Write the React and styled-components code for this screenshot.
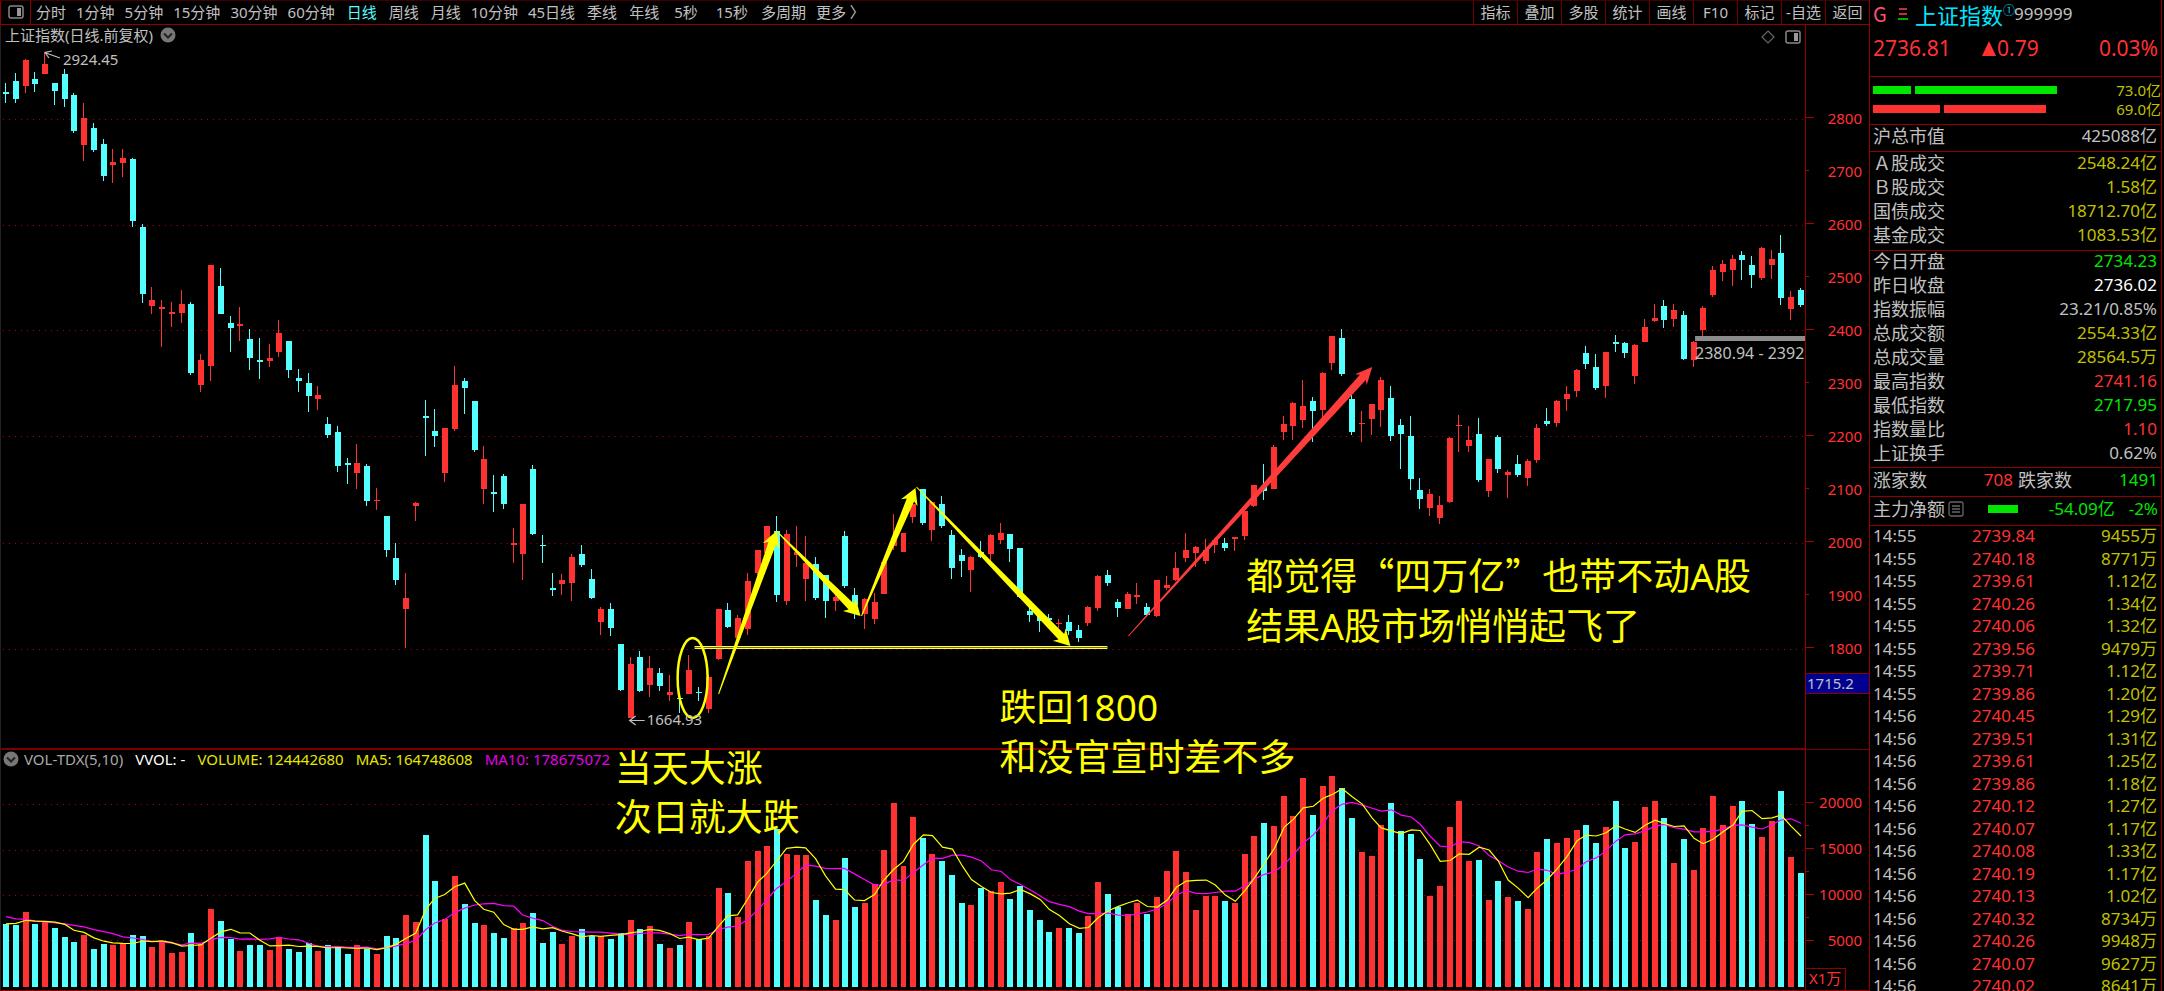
import React from 'react';
import styled, { createGlobalStyle } from 'styled-components';

const RED = '#ff3232';
const CYAN = '#54ffff';
const GREEN = '#00e600';
const GOLD = '#c0c000';
const GREY = '#c0c0c0';
const LINE = '#900000';
const SANS = '"Noto Sans", "Noto Sans CJK SC", sans-serif';

const GlobalStyle = createGlobalStyle`
  * { box-sizing: border-box; }
  body {
    margin: 0;
    background: #000;
    color: ${GREY};
    font: 15px/20px ${SANS};
    overflow: hidden;
  }
`;

/* ---------- chart data ---------- */

/* Each block: vertical origin, then candles as colour, high, body top, body bottom, low (thirds of a unit). */
const BLOCKS = [
  [0, `c248,275,281,310 c218,243,297,310 r178,181,258,278 c215,237,251,276 r160,192,222,222 c248,249,273,314
  c207,222,296,321 c278,285,394,400 r308,353,435,482 c368,383,450,456 c416,432,528,543 r447,486,496,549
  r447,474,488,531 c474,477,663,681 c672,680,882,909 r860,900,919,943 r901,920,926,1041 r905,935,941,980
  r871,912,938,970 c905,911,1118,1124 r1062,1080,1155,1175 r796,796,1099,1143 c803,858,941,943 c949,968,983,1055
  r922,972,978,1022 c987,1017,1074,1109 c1013,1080,1085,1136 r1032,1074,1084,1102 r960,999,1055,1071
  c1023,1024,1110,1134 c1107,1134,1143,1175 c1118,1149,1189,1236 r1159,1186,1196,1231`],
  [340, `c230,252,285,293 c259,275,379,395 c353,369,375,431 r312,369,399,448 c373,379,484,497 r444,480,484,509
  c528,529,630,651 c608,654,720,734 r698,773,806,924 r487,489,499,543 c181,227,233,348 c207,274,289,321
  r263,264,399,426 r79,136,267,272 c113,124,143,221 c184,184,330,336 r319,357,447,493 c405,455,461,516
  c402,409,492,508 r564,609,614,669 r491,492,641,719 c375,387,582,584 c586,614,618,669 c698,744,749,768
  r702,721,731,764 r642,650,728,783 c616,642,676,680 c687,717,773,778 r800,807,845,884 c788,807,864,887
  c911,912,1050,1053 r950,972,1133,1135 c934,950,1054,1055 r947,984,1035,1071 c983,998,1039,1053 r1005,1055,1065,1083`],
  [460, `c708,714,717,760 r586,630,701,703 c680,695,699,722 r646,650,747,760 r447,448,598,600 c429,450,500,503
  r465,474,533,535 r338,364,508,526 r270,271,340,345 r198,199,280,285 c169,213,405,426 r210,222,423,434
  r199,275,285,321 r229,308,357,423 c290,311,413,419 c345,346,423,474 r400,411,423,452 c214,228,379,385
  c383,405,435,478 r414,416,462,508 r398,425,476,492 r300,305,402,403 r162,235,258,270 r218,219,275,288
  r130,132,170,188 c87,88,188,194 r122,125,210,242 c109,132,199,204 c210,225,324,358 c267,285,303,351
  r288,291,330,395 c243,275,290,295 r222,225,282,305 r188,219,241,252 c221,222,267,306 c263,264,412,415
  c445,452,465,486 c450,465,484,516 c462,475,480,500 r477,489,492,503 c465,486,513,526 c495,510,534,546
  r438,440,488,497 r346,349,443,452 c331,346,369,377 c416,425,443,471 r395,402,446,447 r369,404,411,431`],
  [300, `c909,921,945,948 r840,841,948,951 r829,855,865,870 r755,804,841,843 r698,750,773,785 r737,740,759,800
  r717,750,784,793 r715,720,735,760 c713,728,744,752 r710,711,716,753 r628,632,708,720 r555,556,619,621
  c492,560,573,600 r435,440,567,568 r348,372,395,419 r306,309,379,419 r240,317,359,384 c292,304,333,426
  r215,219,330,360 r108,109,188,209 c87,113,221,227 c285,297,395,404 r334,368,372,426 r311,312,356,404
  r230,240,330,381 c259,294,408,423 c356,375,402,506 c349,408,537,569 c533,570,597,628 r568,582,623,647
  r588,616,654,671 r410,413,607,609 r345,376,379,456 r377,420,438,455`],
  [200, `c655,702,840,846 r776,777,873,891 c705,710,806,819 r809,815,825,895 c765,792,825,830 r777,783,833,857
  r672,683,780,790 c623,664,671,678 r600,604,668,681 r559,582,597,632 r507,510,574,591 c438,459,491,508
  c461,500,564,569 r455,455,559,594 c405,426,431,455 c425,429,459,474 r432,435,528,552 r357,380,426,427
  r312,353,364,365 c299,319,360,384 r311,330,356,381 c334,346,477,480 r422,425,481,501 r319,323,390,410
  r199,210,285,292 r179,192,216,243 r165,177,210,258 c153,166,181,240 c169,195,225,265 r140,144,234,239
  r150,177,195,236 c105,158,293,314 r274,290,326,359 c263,270,315,320`],
];

const CANDLES = BLOCKS.flatMap(([origin, text]) =>
  text.trim().split(/\s+/).map((item) => {
    const [high, top, bottom, low] = item.slice(1).split(',').map((n) => origin + Number(n) / 3);
    return { color: item[0] === 'r' ? RED : CYAN, high, top, bottom, low };
  }),
);

/* Depth of each volume bar's top below the pane origin; the lead-in only feeds the averages. */
const LEAD_IN = [490, 500, 510, 520, 520, 563, 563, 540, 541];
const VOLUMES = [
  552, 555, 517, 552, 544, 563, 590, 605, 584, 627, 612, 615, 613, 586, 589, 622, 604, 640, 637, 579, 613, 506, 544,
  597, 633, 615, 615, 629, 592, 627, 635, 609, 633, 616, 620, 642, 615, 627, 641, 589, 594, 525, 547, 286, 424, 536,
  408, 492, 549, 555, 579, 594, 563, 549, 519, 609, 576, 612, 589, 567, 589, 589, 597, 579, 540, 567, 558, 612, 625,
  615, 546, 598, 589, 445, 459, 532, 363, 333, 319, 268, 341, 345, 345, 481, 525, 540, 354, 500, 490, 433, 330, 190,
  378, 232, 294, 341, 363, 406, 489, 494, 444, 454, 427, 477, 439, 511, 541, 576, 565, 564, 579, 528, 427, 462, 500,
  523, 490, 522, 472, 393, 333, 397, 510, 468, 468, 484, 490, 342, 288, 249, 258, 168, 228, 115, 226, 138, 109, 144,
  234, 337, 348, 255, 189, 274, 282, 357, 468, 438, 262, 184, 363, 361, 480, 424, 472, 484, 506, 337, 297, 310, 295,
  270, 256, 309, 262, 184, 324, 307, 202, 184, 234, 370, 297, 390, 265, 168, 255, 198, 184, 252, 292, 243, 154, 352,
  399,
];

const PLOT = { width: 1805, top: 25, height: 965 };
const xOf = (i) => Math.round(5 + (i * 1796) / 184);
const volumeY = (v) => 740 + v / 3;

function average(days) {
  const all = [...LEAD_IN, ...VOLUMES];
  return VOLUMES.map((_, i) => {
    const end = i + LEAD_IN.length + 1;
    const sum = all.slice(end - days, end).reduce((a, b) => a + b, 0);
    return `${xOf(i)},${volumeY(sum / days).toFixed(1)}`;
  }).join(' ');
}

/* A tapered arrow: a point at the tail, widening to a swept head. */
function arrowPoints(x1, y1, x2, y2, half = 4, head = 16, wing = 9) {
  const len = Math.hypot(x2 - x1, y2 - y1);
  const ux = (x2 - x1) / len;
  const uy = (y2 - y1) / len;
  const at = (back, side) => `${x2 - ux * back - uy * side},${y2 - uy * back + ux * side}`;
  return [at(len, 0.5), at(head - 3, half), at(head, wing), at(0, 0), at(head, -wing), at(head - 3, -half), at(len, -0.5)].join(' ');
}

const TREND_ARROWS = [
  [718, 694, 776, 531],
  [776, 531, 860, 616],
  [861, 616, 915, 488],
  [916, 487, 1070, 646],
];

/* ---------- layout ---------- */

const Screen = styled.div`
  display: grid;
  grid-template-columns: minmax(0, 1fr) 295px;
  height: 100vh;
  overflow: hidden;
`;

const Main = styled.main`
  display: flex;
  flex-direction: column;
  min-width: 0;
  border-bottom: 1px solid ${LINE};
`;

const Toolbar = styled.nav`
  display: flex;
  justify-content: space-between;
  height: 25px;
  flex: none;
  border-top: 1px solid #400000;
  border-bottom: 1px solid ${LINE};
`;

const PlainButton = styled.button`
  border: 0;
  padding: 0 0 2px;
  background: none;
  color: inherit;
  font: inherit;
  cursor: pointer;
  white-space: nowrap;
`;

const PanelToggle = styled(PlainButton)`
  display: flex;
  align-items: center;
  justify-content: center;
  width: 31px;
  border: solid ${LINE};
  border-width: 0 1px;
`;

const Periods = styled.div`
  display: flex;
`;

const Period = styled(PlainButton)`
  padding: ${(p) => (p.$wide ? '0 3px 2px' : '0 0 2px')};
  margin-left: ${(p) => (p.$first ? '5px' : p.$tight ? '10px' : '12px')};
  color: ${(p) => (p.$active ? CYAN : GREY)};
`;

const Tools = styled.div`
  display: flex;
`;

const Tool = styled(PlainButton)`
  width: 44px;
  border-left: 1px solid #700000;
`;

const ChartArea = styled.section`
  display: grid;
  grid-template-columns: minmax(0, 1fr) 64px;
  flex: 1;
  min-height: 0;
`;

const Plot = styled.div`
  position: relative;
  border-left: 1px solid #222;
  overflow: hidden;
`;

const PlotSvg = styled.svg`
  display: block;
  width: 100%;
  height: 100%;
`;

const Legend = styled.div`
  position: absolute;
  top: 0;
  left: 4px;
  display: flex;
  align-items: center;
  gap: 7px;
  white-space: nowrap;
`;

const Corner = styled.div`
  position: absolute;
  top: 5px;
  right: 4px;
  display: flex;
  align-items: center;
  gap: 10px;
`;

const Tint = styled.span`
  color: ${(p) => p.$color};
`;

const Mark = styled.div`
  position: absolute;
  left: calc(100% * ${(p) => p.$x} / ${PLOT.width});
  top: calc(100% * ${(p) => p.$y - PLOT.top} / ${PLOT.height});
  white-space: nowrap;
`;

const VolumeLegend = styled(Mark)`
  display: flex;
  align-items: center;
  gap: 5px;
`;

const Readings = styled.div`
  display: flex;
  gap: 12px;
`;

const GapLabel = styled(Mark)`
  font-size: 16px;
`;

const Note = styled(Mark)`
  color: #ffff00;
  font: 37px/49px 'Noto Sans CJK SC', sans-serif;
`;

const Latin = styled.span`
  font-family: ${SANS};
`;

const Axis = styled.div`
  display: grid;
  grid-template-rows: minmax(0, 724fr) minmax(0, 241fr);
  border-left: 1px solid ${LINE};
  color: ${RED};
`;

const Scale = styled.div`
  position: relative;
  display: flex;
  flex-direction: column;
  padding: ${(p) => p.$pad};
  border-top: ${(p) => (p.$divided ? '1px solid #780000' : '0')};
`;

const ScaleRow = styled.div`
  display: flex;
  align-items: center;
  justify-content: space-between;
  flex: 1 1 0;
  min-height: 0;
  padding-right: 7px;
  &::before {
    content: '';
    width: ${(p) => (p.$minor ? '3px' : '8px')};
    height: 1px;
    background: #b00000;
  }
`;

const ScaleFoot = styled.div`
  flex: 0.7 1 0;
`;

const PriceTag = styled.div`
  position: absolute;
  top: 648px;
  left: 0;
  right: 0;
  height: 21px;
  padding-left: 1px;
  border: solid ${LINE};
  border-width: 1px 0;
  background: #000090;
  color: ${GREY};
  line-height: 18px;
`;

const Unit = styled.div`
  align-self: flex-start;
  height: 22px;
  padding: 0 4px 0 3px;
  border: solid ${LINE};
  border-width: 1px 1px 0 0;
  line-height: 18px;
`;

const Side = styled.aside`
  display: flex;
  flex-direction: column;
  min-height: 0;
  margin-right: 2px;
  border: solid ${LINE};
  border-width: 0 1px;
  font-size: 17px;
  overflow: hidden;
`;

const Heading = styled.header`
  flex: none;
  height: 76px;
  padding: 0 3px;
`;

const NameLine = styled.h1`
  display: flex;
  align-items: center;
  height: 30px;
  margin: 0;
  padding-bottom: 2px;
  font-size: 17px;
  font-weight: 400;
`;

const Badge = styled.span`
  width: 25px;
  color: #ff5070;
  font: 20px/24px 'Noto Sans CJK SC', sans-serif;
`;

const StockName = styled.span`
  margin-left: 7px;
  color: #00e6ff;
  font: 22px/28px 'Noto Sans CJK SC', sans-serif;
`;

const Sup = styled.sup`
  align-self: flex-start;
  width: 11px;
  color: #00c8e6;
  font: 12px/20px 'Noto Sans CJK SC', sans-serif;
`;

const QuoteLine = styled.div`
  display: grid;
  grid-template-columns: 109px 1fr auto;
  color: ${RED};
  font-size: 21px;
  line-height: 36px;
`;

const Change = styled.span`
  display: flex;
  align-items: center;
  gap: 1px;
`;

const Flow = styled.div`
  flex: none;
  padding: 3px 0 5px 3px;
  height: 48px;
  border-top: 1px solid ${LINE};
`;

const FlowRow = styled.div`
  display: flex;
  align-items: center;
  height: 19px;
  gap: 4px;
  color: ${GOLD};
  font-size: 15px;
  & > span {
    margin-left: auto;
  }
`;

const Bar = styled.i`
  width: ${(p) => p.$w}px;
  height: 8px;
  background: ${(p) => p.$color};
`;

const Block = styled.dl`
  flex: none;
  margin: 0;
  padding: ${(p) => p.$pad || '0'} 3px;
  border-top: 1px solid ${LINE};
`;

const Fact = styled.div`
  display: flex;
  align-items: center;
  justify-content: space-between;
  height: ${(p) => p.$h || 24}px;
  padding-bottom: 4px;
`;

const Term = styled.dt`
  display: flex;
  align-items: center;
  gap: 3px;
  font-size: 18px;
`;

const Value = styled.dd`
  margin: 0;
  padding-right: ${(p) => (p.$flush ? '0' : '1px')};
  color: ${(p) => p.$color || GREY};
`;

const Pair = styled.div`
  display: flex;
  align-items: center;
  justify-content: space-between;
  width: 140px;
`;

const NetFlow = styled.div`
  display: flex;
  gap: 14px;
  margin-left: 7px;
`;

const Deals = styled.div`
  flex: 1 1 0;
  min-height: 0;
  overflow: hidden;
  border-top: 1px solid ${LINE};
`;

const DealTable = styled.table`
  width: 100%;
  border-collapse: collapse;
  table-layout: fixed;
  line-height: 20px;
  td {
    padding: 0 4px 2px 3px;
    text-align: right;
  }
  td:first-child {
    width: 76px;
    text-align: left;
  }
  td:nth-child(2) {
    width: 93px;
    color: ${RED};
  }
  td:nth-child(3) {
    color: ${GOLD};
  }
  tr {
    height: 22px;
  }
  tr:nth-child(even) {
    height: 23px;
  }
`;

/* ---------- small drawings ---------- */

const PanelIcon = () => (
  <svg width="16" height="14" viewBox="0 0 16 14" aria-hidden="true">
    <rect x="1" y="1" width="14" height="12" rx="2" fill="none" stroke="#888" strokeWidth="1.5" />
    <rect x="9" y="3" width="4" height="8" fill="#999" />
  </svg>
);

const ChevronBadge = () => (
  <svg width="16" height="16" viewBox="0 0 16 16" aria-hidden="true">
    <circle cx="8" cy="8" r="7.5" fill="#777" />
    <path d="M4 6.5l4 4 4-4" fill="none" stroke="#222" strokeWidth="2" />
  </svg>
);

const Diamond = () => (
  <svg width="14" height="14" viewBox="0 0 14 14" aria-hidden="true">
    <path d="M7 1l6 6-6 6-6-6z" fill="none" stroke="#666" strokeWidth="1.2" />
  </svg>
);

const MenuLines = () => (
  <svg width="10" height="12" viewBox="0 0 10 12" aria-hidden="true">
    <path d="M1 1h8M1 6h8" stroke="#ff4050" strokeWidth="1.5" />
    <path d="M0 11h10" stroke={GREEN} strokeWidth="1.5" />
  </svg>
);

const Triangle = () => (
  <svg width="14" height="15" viewBox="0 0 14 15" aria-hidden="true">
    <path d="M7 0l7 15H0z" fill={RED} />
  </svg>
);

const ListIcon = () => (
  <svg width="16" height="16" viewBox="0 0 16 16" aria-hidden="true">
    <rect x="1" y="1" width="14" height="14" rx="2" fill="none" stroke="#666" strokeWidth="1.3" />
    <path d="M4 5h8M4 8h8M4 11h8" stroke="#999" />
  </svg>
);

/* ---------- content ---------- */

const PERIODS = ['分时', '1分钟', '5分钟', '15分钟', '30分钟', '60分钟', '日线', '周线', '月线', '10分钟', '45日线', '季线', '年线', '5秒', '15秒', '多周期', '更多 〉'];
const TOOLS = ['指标', '叠加', '多股', '统计', '画线', 'F10', '标记', '-自选', '返回'];
const PRICES = [2800, 2700, 2600, 2500, 2400, 2300, 2200, 2100, 2000, 1900, 1800];
const VOLUME_TICKS = [20000, null, 15000, null, 10000, null, 5000];

const TURNOVER = [
  ['Ａ股成交', '2548.24亿', GOLD],
  ['Ｂ股成交', '1.58亿', GOLD],
  ['国债成交', '18712.70亿', GOLD],
  ['基金成交', '1083.53亿', GOLD],
];

const FACTS = [
  ['今日开盘', '2734.23', GREEN],
  ['昨日收盘', '2736.02', '#ffffff'],
  ['指数振幅', '23.21/0.85%', GREY],
  ['总成交额', '2554.33亿', GOLD],
  ['总成交量', '28564.5万', GOLD],
  ['最高指数', '2741.16', RED],
  ['最低指数', '2717.95', GREEN],
  ['指数量比', '1.10', RED],
  ['上证换手', '0.62%', GREY],
];

const DEALS = [
  ['14:55', '2739.84', '9455万'], ['14:55', '2740.18', '8771万'], ['14:55', '2739.61', '1.12亿'],
  ['14:55', '2740.26', '1.34亿'], ['14:55', '2740.06', '1.32亿'], ['14:55', '2739.56', '9479万'],
  ['14:55', '2739.71', '1.12亿'], ['14:55', '2739.86', '1.20亿'], ['14:56', '2740.45', '1.29亿'],
  ['14:56', '2739.51', '1.31亿'], ['14:56', '2739.61', '1.25亿'], ['14:56', '2739.86', '1.18亿'],
  ['14:56', '2740.12', '1.27亿'], ['14:56', '2740.07', '1.17亿'], ['14:56', '2740.08', '1.33亿'],
  ['14:56', '2740.19', '1.17亿'], ['14:56', '2740.13', '1.02亿'], ['14:56', '2740.32', '8734万'],
  ['14:56', '2740.26', '9948万'], ['14:56', '2740.07', '9627万'], ['14:56', '2740.02', '8641万'],
];

const GRID_LINES = [119, 225, 330, 436, 543, 649, 804, 850, 895, 940];

function ChartDrawing() {
  return (
    <PlotSvg viewBox={`0 ${PLOT.top} ${PLOT.width} ${PLOT.height}`} preserveAspectRatio="none" role="img" aria-label="上证指数日线与成交量">
      {GRID_LINES.map((y) => (
        <line key={y} x1="2" x2={PLOT.width} y1={y + 0.5} y2={y + 0.5} stroke="#b80000" strokeDasharray="1 5" />
      ))}
      <rect x="0" y="748" width={PLOT.width} height="2" fill="#780000" />
      <g shapeRendering="crispEdges">
        {CANDLES.map((c, i) => {
          const x = xOf(i);
          const top = Math.round(c.top);
          return (
            <g key={i} fill={c.color}>
              <rect x={x - 1} y={Math.round(c.high)} width="1" height={Math.round(c.low) - Math.round(c.high)} />
              <rect x={x - 3} y={top} width="6" height={Math.max(1, Math.round(c.bottom) - top)} />
              <rect x={x - 3} y={Math.round(volumeY(VOLUMES[i]))} width="6" height={987 - Math.round(volumeY(VOLUMES[i]))} />
            </g>
          );
        })}
      </g>
      <polyline points={average(10)} fill="none" stroke="#ff00ff" strokeWidth="1.2" />
      <polyline points={average(5)} fill="none" stroke="#ffff00" strokeWidth="1.2" />
      <rect x="1695" y="336" width="110" height="5" fill="#8c8c8c" />
      <path d="M59 58L45 53M51 51l-7 1.5 4 5.5" fill="none" stroke={GREY} strokeWidth="1.2" />
      <path d="M644 720.5h-15M635 716l-6 4.5 6 4.5" fill="none" stroke={GREY} strokeWidth="1.2" />
      <rect x="694.5" y="646.5" width="412" height="2" fill="#707000" stroke="#ffff50" />
      <ellipse cx="692" cy="678" rx="15" ry="40" fill="none" stroke="#ffff00" strokeWidth="2.5" />
      {TREND_ARROWS.map((a) => (
        <polygon key={a[0]} points={arrowPoints(...a)} fill="#ffff00" />
      ))}
      <polygon points={arrowPoints(1128, 636, 1372, 367, 4, 17, 8)} fill="#ff3c3c" />
    </PlotSvg>
  );
}

function Sidebar() {
  return (
    <Side>
      <Heading>
        <NameLine>
          <Badge>G</Badge>
          <MenuLines />
          <StockName>上证指数</StockName>
          <Sup>①</Sup>
          <span>999999</span>
        </NameLine>
        <QuoteLine>
          <span>2736.81</span>
          <Change>
            <Triangle />
            0.79
          </Change>
          <span>0.03%</span>
        </QuoteLine>
      </Heading>
      <Flow>
        <FlowRow>
          <Bar $w={38} $color={GREEN} />
          <Bar $w={142} $color={GREEN} />
          <span>73.0亿</span>
        </FlowRow>
        <FlowRow>
          <Bar $w={67} $color={RED} />
          <Bar $w={102} $color={RED} />
          <span>69.0亿</span>
        </FlowRow>
      </Flow>
      <Block>
        <Fact $h={26}>
          <Term>沪总市值</Term>
          <Value>425088亿</Value>
        </Fact>
      </Block>
      <Block $pad="1px">
        {TURNOVER.map(([term, value, color]) => (
          <Fact key={term}>
            <Term>{term}</Term>
            <Value $color={color}>{value}</Value>
          </Fact>
        ))}
      </Block>
      <Block>
        {FACTS.map(([term, value, color]) => (
          <Fact key={term}>
            <Term>{term}</Term>
            <Value $color={color}>{value}</Value>
          </Fact>
        ))}
      </Block>
      <Block>
        <Fact $h={28}>
          <Pair>
            <Term>涨家数</Term>
            <Value $flush $color={RED}>708</Value>
          </Pair>
          <Pair>
            <Term>跌家数</Term>
            <Value $flush $color={GREEN}>1491</Value>
          </Pair>
        </Fact>
      </Block>
      <Block>
        <Fact $h={28}>
          <Term>
            主力净额
            <ListIcon />
          </Term>
          <Bar $w={30} $color={GREEN} />
          <NetFlow>
            <Value $flush $color={GREEN}>-54.09亿</Value>
            <Value $flush $color={GREEN}>-2%</Value>
          </NetFlow>
        </Fact>
      </Block>
      <Deals>
        <DealTable>
          <tbody>
            {DEALS.map(([time, price, amount], i) => (
              <tr key={i}>
                <td>{time}</td>
                <td>{price}</td>
                <td>{amount}</td>
              </tr>
            ))}
          </tbody>
        </DealTable>
      </Deals>
    </Side>
  );
}

export default function App() {
  return (
    <Screen>
      <GlobalStyle />
      <Main>
        <Toolbar>
          <Periods>
            <PanelToggle aria-label="侧栏">
              <PanelIcon />
            </PanelToggle>
            {PERIODS.map((name, i) => (
              <Period key={name} $first={i === 0} $active={name === '日线'} $tight={/\d.*[钟线]/.test(name) || i > 14} $wide={/秒/.test(name)}>
                {name}
              </Period>
            ))}
          </Periods>
          <Tools>
            {TOOLS.map((name) => (
              <Tool key={name}>{name}</Tool>
            ))}
          </Tools>
        </Toolbar>
        <ChartArea>
          <Plot>
            <ChartDrawing />
            <Legend>
              <span>上证指数(日线.前复权)</span>
              <ChevronBadge />
            </Legend>
            <Corner>
              <Diamond />
              <PanelIcon />
            </Corner>
            <VolumeLegend $x={2} $y={749}>
              <ChevronBadge />
              <Readings>
                <Tint $color="#a8a8a8">VOL-TDX(5,10)</Tint>
                <Tint $color="#ffffff">VVOL: -</Tint>
                <Tint $color="#e6e600">VOLUME: 124442680</Tint>
                <Tint $color="#e6e600">MA5: 164748608</Tint>
                <Tint $color="#e600e6">MA10: 178675072</Tint>
              </Readings>
            </VolumeLegend>
            <Mark $x={62} $y={49}>2924.45</Mark>
            <Mark $x={646} $y={709}>1664.93</Mark>
            <GapLabel $x={1695} $y={343}>2380.94 - 2392</GapLabel>
            <Note $x={614} $y={742}>
              当天大涨
              <br />
              次日就大跌
            </Note>
            <Note $x={999} $y={681}>
              跌回<Latin>1800</Latin>
              <br />
              和没官宣时差不多
            </Note>
            <Note $x={1246} $y={550}>
              都觉得“四万亿”也带不动<Latin>A</Latin>股
              <br />
              结果<Latin>A</Latin>股市场悄悄起飞了
            </Note>
          </Plot>
          <Axis>
            <Scale $pad="66px 0 75px">
              {PRICES.map((p, i) => (
                <ScaleRow key={p} $minor={i % 2 === 1}>{p}</ScaleRow>
              ))}
              <PriceTag>1715.2</PriceTag>
            </Scale>
            <Scale $divided $pad="41px 0 0">
              {VOLUME_TICKS.map((v, i) => (
                <ScaleRow key={i} $minor={v === null}>{v}</ScaleRow>
              ))}
              <ScaleFoot />
              <Unit>X1万</Unit>
            </Scale>
          </Axis>
        </ChartArea>
      </Main>
      <Sidebar />
    </Screen>
  );
}
